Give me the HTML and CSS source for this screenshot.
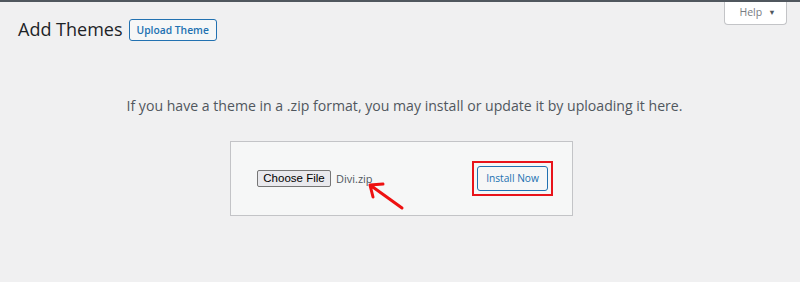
FILE: index.html
```html
<!DOCTYPE html>
<html lang="en">
<head>
<meta charset="utf-8">
<title>Add Themes</title>
<link rel="stylesheet" href="styles.css">
</head>
<body>
<div class="edge"></div>
<div class="wrap">
  <div class="screen-meta-links">
    <button class="help-tab" type="button">Help <span class="caret">&#9660;</span></button>
  </div>
  <div class="title-row">
    <h1 class="page-title">Add Themes</h1>
    <button class="title-action" type="button">Upload Theme</button>
  </div>
  <p class="install-help">If you have a theme in a .zip format, you may install or update it by uploading it here.</p>
  <form class="upload-form">
    <div class="file-field">
      <button class="file-btn" type="button">Choose File</button>
      <span class="file-name">Divi.zip</span>
    </div>
    <span class="highlight"><button class="install-btn" type="button">Install Now</button></span>
    <svg class="arrow" width="44" height="36" viewBox="0 0 44 36" aria-hidden="true">
      <path d="M38 31 L6 8 M6 8 L19 7 M6 8 L9 20" fill="none" stroke="#ee1111" stroke-width="3" stroke-linecap="round" stroke-linejoin="round"/>
    </svg>
  </form>
</div>
</body>
</html>
```
FILE: styles.css
```css
html, body {
  margin: 0;
  padding: 0;
}
body {
  background: #f0f0f1;
  font-family: "Open Sans", "Noto Sans", sans-serif;
  color: #3c434a;
  height: 282px;
  overflow: hidden;
}
.edge {
  height: 2px;
  background: #50575e;
}
.wrap {
  display: flow-root;
  padding: 0 13px 0 18px;
}
.screen-meta-links {
  float: right;
}
.help-tab {
  display: flex;
  align-items: center;
  justify-content: center;
  gap: 6px;
  box-sizing: border-box;
  width: 63px;
  height: 23px;
  margin: 0;
  padding: 0 0 2px 4px;
  background: #fff;
  border: 1px solid #c3c4c7;
  border-top: none;
  border-radius: 0 0 4px 4px;
  font-family: "Open Sans", "Noto Sans", sans-serif;
  font-size: 10.5px;
  color: #787c82;
}
.caret {
  font-size: 7.5px;
  color: #50575e;
}
.title-row {
  display: flex;
  align-items: center;
  margin-top: 16px;
  height: 23px;
}
.page-title {
  margin: 0;
  font-size: 18px;
  line-height: 23px;
  font-weight: 400;
  color: #1d2327;
}
.title-action {
  box-sizing: border-box;
  height: 22px;
  margin: 0 0 0 6px;
  padding: 0 7px;
  border: 1px solid #2271b1;
  border-radius: 3px;
  background: #f6f7f7;
  color: #2271b1;
  font-family: "Open Sans", "Noto Sans", sans-serif;
  font-size: 10.3px;
  font-weight: 600;
  line-height: 20px;
}
.install-help {
  margin: 57px 0 0;
  padding-left: 4px;
  font-size: 14.1px;
  line-height: 16px;
  text-align: center;
  color: #50575e;
}
.upload-form {
  position: relative;
  box-sizing: border-box;
  width: 343px;
  height: 75px;
  margin: 27px 0 0 212px;
  padding: 0 19px 0 26px;
  display: flex;
  align-items: center;
  background: #f6f7f7;
  border: 1px solid #c3c4c7;
}
.file-field {
  display: flex;
  align-items: center;
  gap: 5px;
}
.file-btn {
  box-sizing: border-box;
  width: 74px;
  height: 17px;
  margin: 0;
  padding: 0;
  border: 1px solid #767676;
  border-radius: 2px;
  background: #e9e9ed;
  color: #000;
  font-family: "Liberation Sans", Arial, sans-serif;
  font-size: 11.5px;
  line-height: 15px;
}
.file-name {
  font-size: 11px;
  color: #50575e;
  line-height: 15px;
}
.highlight {
  margin-left: auto;
  display: flex;
  padding: 3px;
  border: 2px solid #e8141b;
}
.install-btn {
  box-sizing: border-box;
  width: 71px;
  height: 25px;
  margin: 0;
  padding: 0;
  border: 1px solid #2271b1;
  border-radius: 3px;
  background: #f6f7f7;
  color: #2271b1;
  font-family: "Open Sans", "Noto Sans", sans-serif;
  font-size: 10.2px;
  line-height: 23px;
}
.arrow {
  position: absolute;
  left: 133px;
  top: 35px;
}
```
